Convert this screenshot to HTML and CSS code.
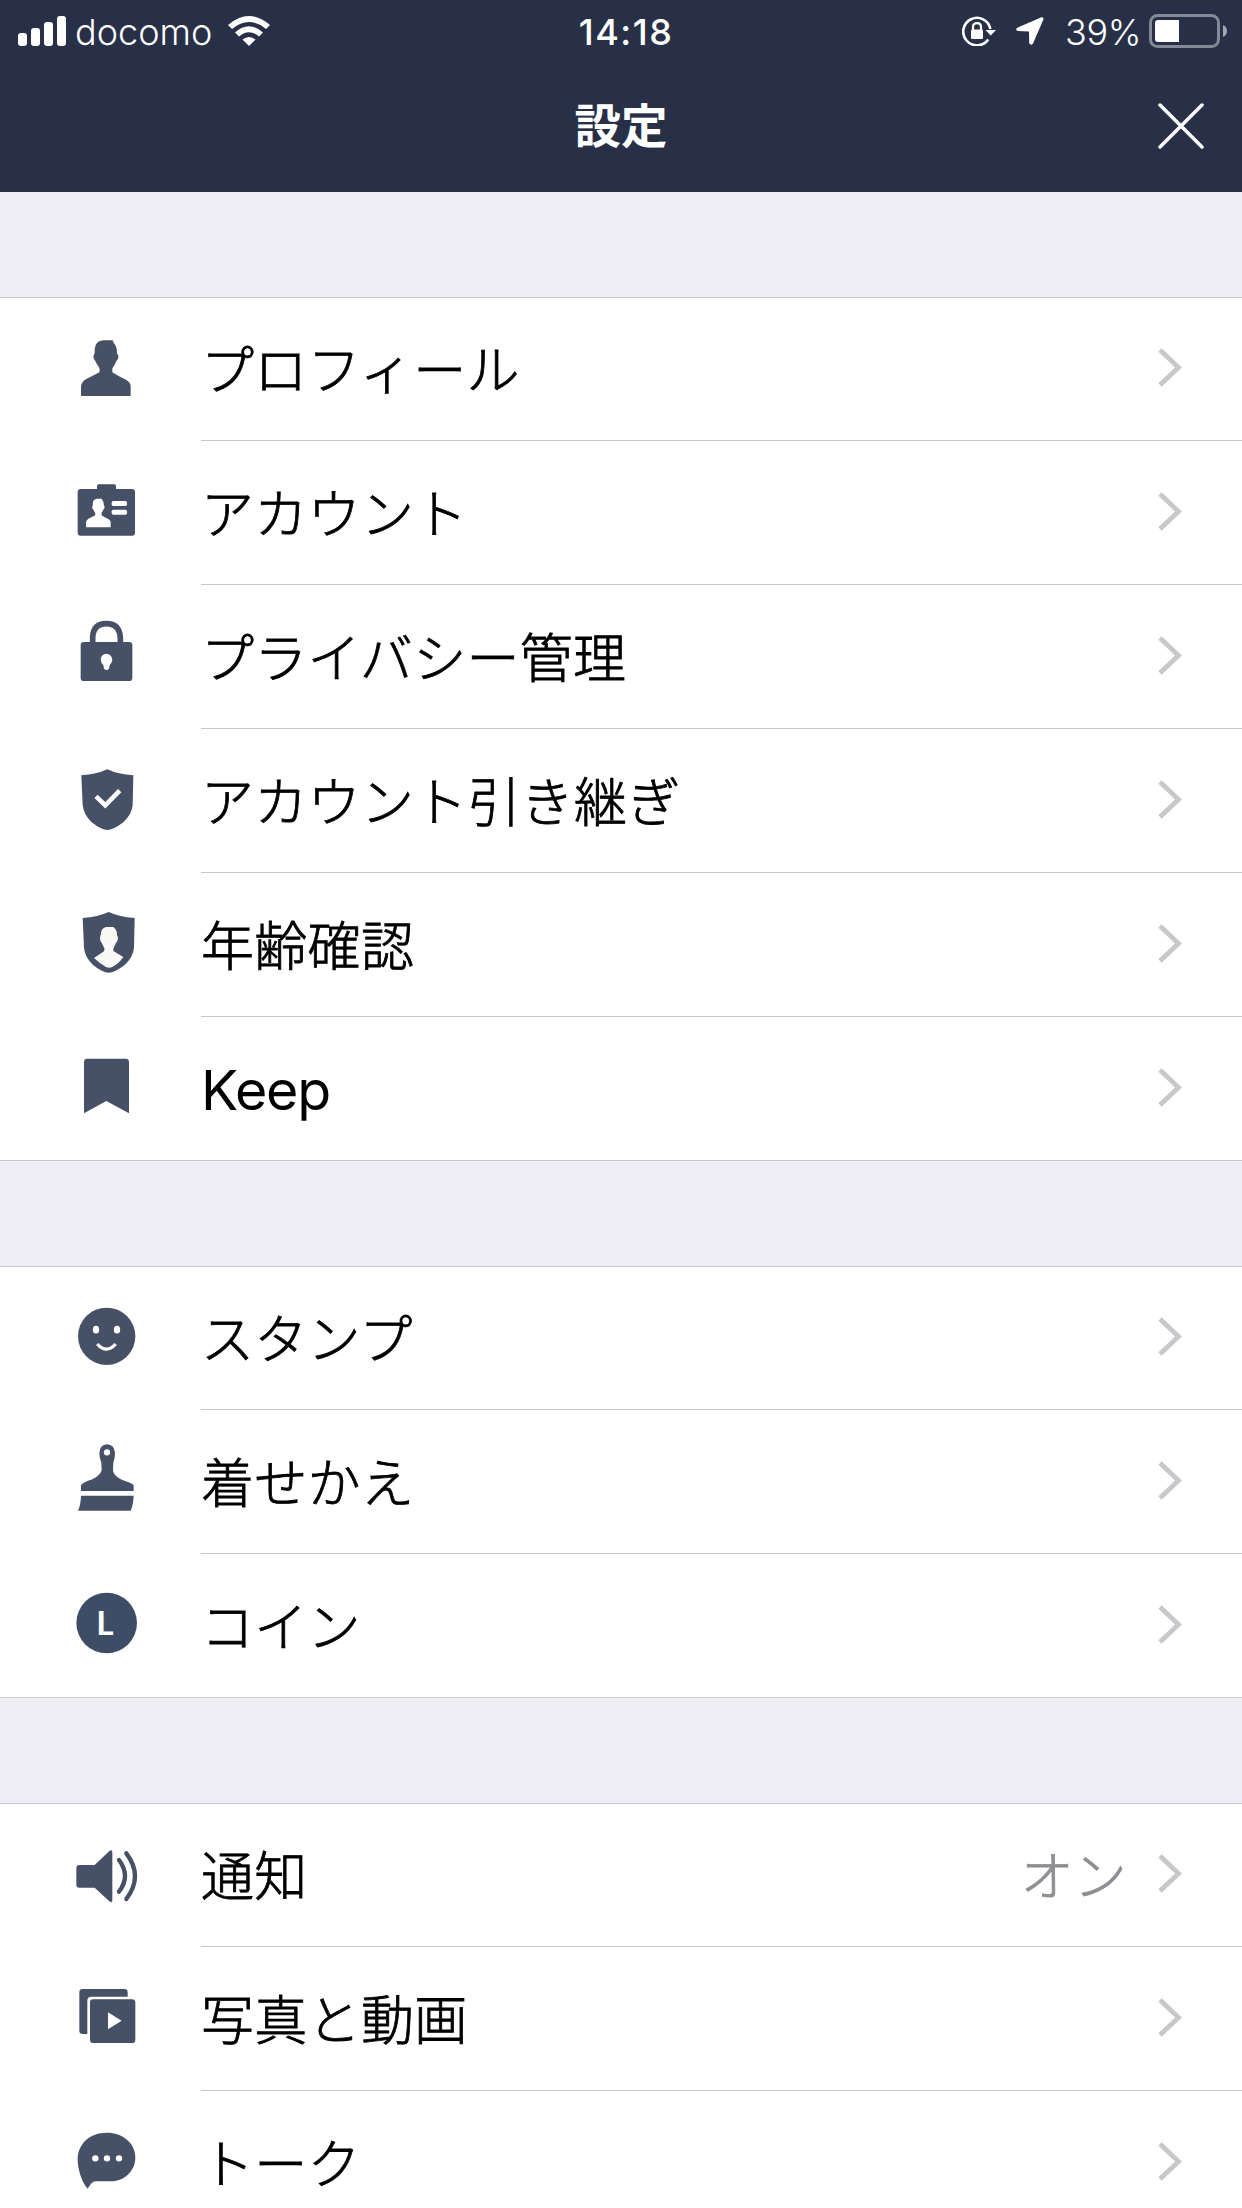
FILE: index.html
```html
<!DOCTYPE html>
<html lang="ja">
<head>
<meta charset="utf-8">
<title>設定</title>
<link rel="stylesheet" href="styles.css">
</head>
<body>
<svg class="defs" width="0" height="0">
  <symbol id="person" viewBox="0 0 216 216"><path d="M100 22H127Q130 23 131 30Q141 38 141 62L145 67Q146 80 139 84Q134 98 127 106V118Q145 130 168 140Q182 148 182 160V187Q182 189 180 189H35Q33 189 33 187V160Q34 146 50 137Q70 128 88 118Q90 110 88 104Q80 94 76 84Q70 80 70 70L74 60V48Q76 24 100 22Z"/></symbol>
  <symbol id="shield" viewBox="0 0 216 216"><path d="M112 13Q144 28 190 31L188 120Q186 147 160 172Q130 195 112 195Q94 195 65 172Q40 147 38 120L34 31Q80 28 112 13Z"/></symbol>
  <symbol id="chevron" viewBox="0 0 24 40"><path d="M2 2L20.500 19.500L2 37" fill="none" stroke="#c7c7cc" stroke-width="4.800"/></symbol>
</svg>

<header class="header">
  <div class="status">
    <div class="status-left">
      <svg class="signal" width="48" height="30" viewBox="0 0 48 30"><rect y="17" width="9" height="13" rx="3"/><rect x="13" y="12" width="9" height="18" rx="3"/><rect x="26" y="6" width="9" height="24" rx="3"/><rect x="39" width="9" height="30" rx="3"/></svg>
      <span class="carrier">docomo</span>
      <svg class="wifi" width="42" height="30" viewBox="0 0 42 30"><path d="M0 9Q21-9 42 9L38 13Q21-1 4 13Z"/><path d="M7 16.500Q21 4 35 16.500L31 20.500Q21 12 11 20.500Z"/><path d="M14.500 23.500Q21 18.500 27.500 23.500L21 30Z"/></svg>
    </div>
    <span class="clock">14:18</span>
    <div class="status-right">
      <svg width="34" height="30" viewBox="0 0 34 30"><path d="M26.200 23.400A13.700 13.700 0 1 1 28.400 13" fill="none" stroke="#fff" stroke-width="2.600"/><path d="M23.500 14H34L28.700 19.500Z"/><rect x="9" y="13.500" width="12" height="9.500" rx="1.200"/><path d="M11 14V11Q11 7.200 15 7.200T19 11V14" fill="none" stroke="#fff" stroke-width="2.200"/></svg>
      <svg class="location" width="28" height="28" viewBox="0 0 28 28"><path d="M25.500.3Q28 .2 27.300 2.700L17 26.500Q15 29 13.200 26.200L13 14.500L1.500 14Q-1 12.500 1.200 10.800Z"/></svg>
      <span class="percent">39%</span>
      <svg class="battery" width="78" height="34" viewBox="0 0 78 34"><rect x="1.500" y="1.500" width="68" height="31" rx="7" fill="none" stroke="#828997" stroke-width="3"/><path d="M9 6H30V28H9Q6 28 6 25V9Q6 6 9 6Z"/><path d="M74 11Q78 12.500 78 17T74 23Z" fill="#a0a5af"/></svg>
    </div>
  </div>
  <div class="nav">
    <h1 class="title">設定</h1>
    <svg class="close" width="46" height="46" viewBox="0 0 46 46"><path d="M2 2L44 44M44 2L2 44" fill="none" stroke="#fff" stroke-width="3.500" stroke-linecap="round"/></svg>
  </div>
</header>

<main class="settings">
  <section class="group">
    <div class="row">
      <svg class="icon"><use href="#person"/></svg>
      <div class="cell"><span class="label">プロフィール</span><svg class="chevron"><use href="#chevron"/></svg></div>
    </div>
    <div class="row">
      <svg class="icon" viewBox="0 0 216 216"><path d="M32 36H81V27Q81 22 86 22H133Q138 22 138 27V36H186Q195 36 195 45V167Q195 176 186 176H32Q23 176 23 167V45Q23 36 32 36Z"/><g fill="#fff"><use href="#person" width="216" height="216" transform="translate(31.600 53.700) scale(.497 .515)"/><rect x="125" y="72" width="46" height="15" rx="5"/><rect x="125" y="98" width="46" height="15" rx="5"/></g></svg>
      <div class="cell"><span class="label">アカウント</span><svg class="chevron"><use href="#chevron"/></svg></div>
    </div>
    <div class="row">
      <svg class="icon" viewBox="0 0 216 216"><path d="M68 68V49Q70 8 109 8T151 49V68" fill="none" stroke="#465066" stroke-width="17"/><rect x="32" y="63" width="155" height="117" rx="10"/><path d="M109 98Q125 99 127 116Q126 125 119 132L117 143Q109 151 102 143L100 132Q93 125 92 116Q93 99 109 98Z" fill="#fff"/></svg>
      <div class="cell"><span class="label">プライバシー管理</span><svg class="chevron"><use href="#chevron"/></svg></div>
    </div>
    <div class="row">
      <svg class="icon" viewBox="0 0 216 216"><use href="#shield" width="216" height="216"/><path d="M78 94L106 121L149 77" fill="none" stroke="#fff" stroke-width="14"/></svg>
      <div class="cell"><span class="label">アカウント引き継ぎ</span><svg class="chevron"><use href="#chevron"/></svg></div>
    </div>
    <div class="row">
      <svg class="icon" viewBox="0 0 216 216"><use href="#shield" x="4" y="-4" width="216" height="216"/><path d="M108 54H130L134 58Q141 64 141 78L144 86Q144 97 138 101L130 119V126L160 144Q148 162 127 174Q117 179 108 174Q87 162 72 147L102 127Q106 120 101 114L95 101Q90 97 90 86L92 78Q93 57 108 54Z" fill="#f9f9f7"/></svg>
      <div class="cell"><span class="label">年齢確認</span><svg class="chevron"><use href="#chevron"/></svg></div>
    </div>
    <div class="row">
      <svg class="icon" viewBox="0 0 216 216"><path d="M52 17H167Q177 17 177 27V181L109 144L42 181V27Q42 17 52 17Z"/></svg>
      <div class="cell"><span class="label label-latin">Keep</span><svg class="chevron"><use href="#chevron"/></svg></div>
    </div>
  </section>

  <section class="group">
    <div class="row">
      <svg class="icon" viewBox="0 0 216 216"><circle cx="110" cy="103" r="86"/><g fill="#fff"><ellipse cx="78" cy="83" rx="9.500" ry="11.500"/><ellipse cx="141" cy="83" rx="9.500" ry="11.500"/></g><path d="M82 126Q109 157 137 126" fill="none" stroke="#fff" stroke-width="10"/></svg>
      <div class="cell"><span class="label">スタンプ</span><svg class="chevron"><use href="#chevron"/></svg></div>
    </div>
    <div class="row">
      <svg class="icon" viewBox="0 0 216 216"><path d="M111-5Q133-4 135 21Q135 36 130 50L129 75Q133 91 157 102Q185 111 191 118V135H33V117Q39 110 67 100Q90 90 95 73L94 50Q88 36 88 21Q90-4 111-5Z"/><path d="M33 149H191Q190 176 182 194H24Q32 178 33 149Z"/><circle cx="111" cy="19" r="9.500" fill="#fff"/></svg>
      <div class="cell"><span class="label">着せかえ</span><svg class="chevron"><use href="#chevron"/></svg></div>
    </div>
    <div class="row">
      <svg class="icon" viewBox="0 0 216 216"><circle cx="110" cy="99" r="91" fill="#3e4d66"/><text class="coin-letter" x="79" y="135">L</text></svg>
      <div class="cell"><span class="label">コイン</span><svg class="chevron"><use href="#chevron"/></svg></div>
    </div>
  </section>

  <section class="group">
    <div class="row">
      <svg class="icon" viewBox="0 0 216 216"><path d="M28 78H74L118 36Q127 30 127 40V184Q127 193 118 187L74 146H28Q19 146 19 137V87Q19 78 28 78Z"/><path d="M147 63Q183 111 147 158M169 43Q221 111 169 180" fill="none" stroke="#465066" stroke-width="13" stroke-linecap="round"/></svg>
      <div class="cell"><span class="label">通知</span><span class="value">オン</span><svg class="chevron"><use href="#chevron"/></svg></div>
    </div>
    <div class="row">
      <svg class="icon" viewBox="0 0 216 216"><path d="M38 18H163Q173 18 173 28V41H64Q52 41 52 53V153H38Q28 153 28 143V28Q28 18 38 18Z"/><rect x="60" y="49" width="136" height="131" rx="10"/><path d="M114 88L155 113L114 139Z" fill="#fff"/></svg>
      <div class="cell"><span class="label">写真と動画</span><svg class="chevron"><use href="#chevron"/></svg></div>
    </div>
    <div class="row">
      <svg class="icon" viewBox="0 0 216 216"><path d="M110 17C158 17 196 48 196 91C196 135 160 163 125 163H77C65 163 61 175 53 185C35 165 23 125 23 98C23 50 60 17 110 17Z"/><g fill="#fff"><circle cx="76" cy="94" r="9.500"/><circle cx="111" cy="94" r="9.500"/><circle cx="147" cy="94" r="9.500"/></g></svg>
      <div class="cell"><span class="label">トーク</span><svg class="chevron"><use href="#chevron"/></svg></div>
    </div>
  </section>
</main>
</body>
</html>
```
FILE: styles.css
```css
* { box-sizing: border-box; }

html, body {
  margin: 0;
  height: 2208px;
}

body {
  background: #efeef4;
  color: #000;
  font-family: Inter, "Noto Sans CJK JP", sans-serif;
}

svg { display: block; flex: none; }
.defs { position: absolute; }

.header {
  height: 192px;
  background: #273047;
  color: #fff;
  fill: #fff;
}

.status {
  display: grid;
  grid-template-columns: 1fr auto 1fr;
  align-items: center;
  height: 60px;
  padding: 0 15px 0 18px;
}

.status-left, .status-right {
  display: flex;
  align-items: center;
}

.status-right { justify-content: flex-end; }

.carrier, .percent, .clock {
  padding-top: 2px;
  line-height: 60px;
  font-size: 36px;
  white-space: nowrap;
}

.carrier {
  width: 137px;
  margin: 0 16px 0 9px;
  font-weight: 350;
  letter-spacing: 0;
}

.clock {
  padding-left: 7px;
  font-weight: 550;
  letter-spacing: 1.500px;
}

.percent {
  width: 73px;
  margin: 0 11px 0 21px;
  font-weight: 350;
  letter-spacing: -.4px;
}

.location { margin-left: 20px; }

.nav {
  display: grid;
  grid-template-columns: 1fr auto 1fr;
  align-items: center;
  height: 132px;
  padding: 0 38px;
}

.title {
  grid-column: 2;
  margin: 0;
  padding-bottom: 6px;
  font: 700 46.500px/60px "Noto Sans CJK JP", sans-serif;
}

.close { justify-self: end; }

.settings {
  height: 2016px;
  padding-top: 105px;
  overflow: hidden;
}

.group {
  margin-bottom: 105px;
  background: #fff;
  box-shadow: inset 0 1px #c8c7cc, inset 0 -1px #c8c7cc;
}

.row {
  display: flex;
  align-items: center;
  height: 144px;
  padding-left: 70px;
}

.icon {
  width: 72px;
  height: 72px;
  margin-right: 59px;
  overflow: visible;
  fill: #465066;
}

.coin-letter {
  fill: #fff;
  font: 700 100px Lato, sans-serif;
}

.cell {
  display: flex;
  flex: 1;
  align-items: center;
  height: 144px;
  padding-right: 60px;
  border-bottom: 1px solid #c8c7cc;
}

.row:last-child .cell { border-bottom-color: transparent; }

.label, .value {
  padding-bottom: 4px;
  font: 300 53px/80px "Noto Sans CJK JP", sans-serif;
  letter-spacing: .3px;
  -webkit-text-stroke: .8px currentColor;
  white-space: nowrap;
}

.label { flex: 1; }

.label-latin {
  padding: 2px 0 0;
  font: 400 55.500px/80px Inter, sans-serif;
  letter-spacing: -1.200px;
  -webkit-text-stroke: 0;
}

.value {
  margin-right: 31px;
  color: #8e8e93;
}

.chevron {
  width: 24px;
  height: 40px;
  margin-bottom: 2px;
}
```
